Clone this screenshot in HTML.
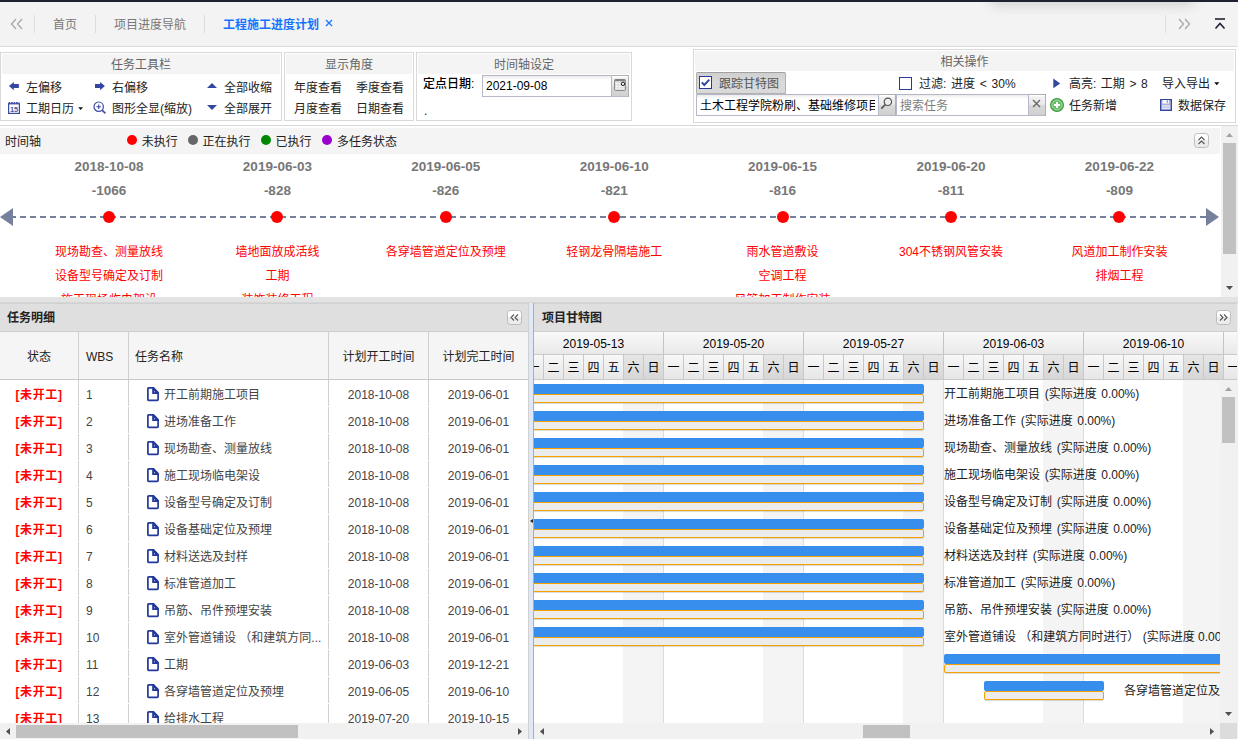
<!DOCTYPE html>
<html lang="zh-CN"><head><meta charset="utf-8"><title>工程施工进度计划</title>
<style>
*{box-sizing:border-box}
html,body{margin:0;padding:0}
body{width:1238px;height:739px;overflow:hidden;position:relative;background:#fff;color:#222;font:12px/16px "Liberation Sans","Noto Sans CJK SC",sans-serif}
i{display:block;position:absolute;font-style:normal}
.topbar{position:absolute;left:0;top:0;width:1238px;height:2px;background:#1f2233}
.tabs{position:absolute;left:0;top:2px;width:1238px;height:45px;background:#f3f3f3;border-bottom:1px solid #dcdcdc;overflow:hidden}
.tabs span{position:absolute;top:15px;line-height:16px;color:#777;white-space:nowrap}
.tabs .sep{position:absolute;top:13px;width:1px;height:18px;background:#dcdce2}
.tabs .act{color:#1673ff;font-weight:bold}
.tabs svg{position:absolute}
.tbar{position:absolute;left:0;top:47px;width:1238px;height:79px;background:#fff;border-bottom:1px solid #d8d8d8}
.grp{position:absolute;border:1px solid #d9d9d9;background:#fff}
.grp .gt{position:absolute;left:1px;right:1px;top:1px;height:20px;background:#f4f4f4;color:#666;text-align:center;line-height:22px}
.grp span{position:absolute;white-space:nowrap;line-height:16px;color:#222}
.grp svg{position:absolute}
.inp{position:absolute;border:1px solid #b5b8c8;background:#fff;height:22px;line-height:20px;padding-left:3px;color:#000;white-space:nowrap;overflow:hidden;background-image:linear-gradient(#ececec,#fff 4px)}
.trg{position:absolute;height:22px;width:17px;border:1px solid #b0b0b0;border-left:0;border-bottom-color:#b5b8c8;background:linear-gradient(#fff 0,#fff 1px,#f1f1f1 2px,#e9e9e9 47%,#d9d9d9 53%,#d0d0d0)}
.cb{position:absolute;width:13px;height:13px;border:1px solid #2b3a9a;background:#fff}
/* timeline */
.tl{position:absolute;left:0;top:126px;width:1238px;height:171px;background:#fff;overflow:hidden}
.tlh{position:absolute;left:0;top:2px;width:1220px;height:26px;background:#f4f4f4}
.tlt{position:absolute;left:5px;top:6px}
.dot{width:10px;height:10px;border-radius:50%;top:6.5px}
.lg{position:absolute;top:6px;white-space:nowrap}
.tool{position:absolute;width:15px;height:15px;border:1px solid #bdbdbd;border-radius:3.5px;background:linear-gradient(#fff 50%,#ececec 50%)}
.tool svg{position:absolute;left:0;top:1px}
.tlb{position:absolute;left:0;top:28px;width:1220px;height:143px;overflow:hidden}
.axis{position:absolute;left:10px;top:62px;width:1198px;height:2px;background:repeating-linear-gradient(90deg,#75809c 0,#75809c 6px,transparent 6px,transparent 10px)}
.arl{left:0;top:54px;width:0;height:0;border-top:9px solid transparent;border-bottom:9px solid transparent;border-right:13px solid #75809c}
.arr{left:1206px;top:54px;width:0;height:0;border-top:9px solid transparent;border-bottom:9px solid transparent;border-left:13px solid #75809c}
.tc{position:absolute;top:0;width:168px;height:143px;text-align:center}
.td,.tn{position:absolute;left:0;width:100%;font-weight:bold;color:#777;font-size:13.5px}
.td{top:5px}.tn{top:29px}
.rd{left:78px;top:57px;width:12px;height:12px;border-radius:50%;background:#f00}
.tt{position:absolute;left:-20px;right:-20px;color:#f00;white-space:nowrap}
/* scrollbars */
.vsb{position:absolute;width:17px;background:#f1f1f1}
.vsb .th{left:2px;width:13px;background:#c1c1c1}
.vsb .up{left:5px;top:7px;width:7px;height:4px;background:#a3a3a3;clip-path:polygon(50% 0,100% 100%,0 100%)}
.vsb .dn{left:5px;bottom:7px;width:7px;height:4px;background:#505050;clip-path:polygon(0 0,100% 0,50% 100%)}
.hsb{position:absolute;height:17px;background:#f1f1f1}
.hsb .th{top:2px;height:13px;background:#c1c1c1}
.hsb .lf{left:6px;top:5px;width:4px;height:7px;background:#505050;clip-path:polygon(100% 0,100% 100%,0 50%)}
.hsb .rt{right:6px;top:5px;width:4px;height:7px;background:#505050;clip-path:polygon(0 0,100% 50%,0 100%)}
.corner{left:686px;bottom:0;width:17px;height:16px;background:#dcdcdc}
.hsplit{position:absolute;left:0;top:297px;width:1238px;height:6px;background:#e3e3e3;border-bottom:1px solid #d6d6d6}
/* left panel */
.lp{position:absolute;left:0;top:303px;width:528px;height:436px;overflow:hidden;background:#fff}
.ph{position:absolute;left:0;top:0;width:100%;height:29px;background:#dfdfdf;border-top:1px solid #d0d0d0;border-bottom:1px solid #cfcfcf}
.ph b{position:absolute;left:7px;top:6px;color:#222;white-space:nowrap}
.gh{position:absolute;left:0;top:29px;width:528px;height:48px;background:#f5f5f5;border-bottom:1px solid #c8c8c8}
.hc{position:absolute;top:0;height:47px;line-height:50px;border-right:1px solid #d0d0d0;white-space:nowrap;color:#222}
.gb{position:absolute;left:0;top:77px;width:528px;height:343px;overflow:hidden}
.r{position:absolute;left:0;width:528px;height:27px;border-bottom:1px solid #fff}
.c{position:absolute;top:0;height:26px;line-height:30px;white-space:nowrap;overflow:hidden;border-right:1px solid #d0d0d0;color:#444}
.st{left:0;width:79px;text-align:center;color:#f00;font-weight:bold;letter-spacing:.6px}
.wb{left:79px;width:50px;padding-left:7px}
.nm{left:129px;width:200px}
.nm span{position:absolute;left:35px;top:0}
.doc{position:absolute;left:18px;top:7px}
.d1{left:329px;width:100px;text-align:center}
.d2{left:429px;width:99px;text-align:center;border-right:0}
.vsplit{position:absolute;left:528px;top:303px;width:6px;height:436px;background:#dfe8f6;border-left:1px solid #d0d0d0;border-right:1px solid #8db2e3}
.vsplit b{position:absolute;left:0;top:202px;width:4px;height:34px;background:#e6e6e6;clip-path:polygon(0 13%,100% 0,100% 100%,0 87%)}
.vsplit i{left:.5px;top:216px;border-top:2.7px solid transparent;border-bottom:2.7px solid transparent;border-right:3.2px solid #222}
/* gantt */
.gp{position:absolute;left:534px;top:303px;width:703px;height:436px;overflow:hidden;background:#fff}
.wk{position:absolute;left:0;top:29px;width:704px;height:22px;background:linear-gradient(#f9f9f9,#e9e9e9);overflow:hidden}
.w{position:absolute;top:0;width:140px;height:22px;line-height:24px;text-align:center;border-right:1px solid #c4c4c4;color:#000}
.dy{position:absolute;left:0;top:51px;width:704px;height:26px;background:linear-gradient(#f9f9f9,#e6e6e6);border-bottom:1px solid #c8c8c8;overflow:hidden}
.d{position:absolute;top:0;width:20px;height:25px;line-height:27px;text-align:center;border-right:1px solid #c8c8c8;border-top:1px solid #cacaca;color:#000}
.d.we{background:linear-gradient(#e6e6e6,#d6d6d6)}
.gbody{position:absolute;left:0;top:77px;width:687px;height:343px;overflow:hidden;background:#fff}
.wl{top:0;width:1px;height:343px;background:#dcdcdc}
.wb2{top:0;width:40px;height:343px;background:#f4f4f4}
.bar{height:10px;background:#388eec;border-radius:2px}
.base{height:9px;background:#ececec;border:1px solid #f5a200;border-radius:2px;box-shadow:0 1px 1px rgba(0,0,0,.15)}
.gl{position:absolute;white-space:nowrap;line-height:18px;color:#222;word-spacing:1.3px}

body{background:#f0f0f0}

</style></head><body>
<div class="topbar"></div>
<div class="tabs">
<i style="left:990px;top:-14px;width:205px;height:14px;border-radius:6px;box-shadow:0 2px 14px rgba(0,0,0,.16)"></i>
<svg style="left:9.5px;top:16px" width="14" height="12" viewBox="0 0 14 12"><path d="M6 1 L1.5 6 L6 11 M12 1 L7.5 6 L12 11" fill="none" stroke="#a4a8b4" stroke-width="1.3"/></svg>
<i class="sep" style="left:34px"></i><span style="left:53px">首页</span>
<i class="sep" style="left:95px"></i><span style="left:114px">项目进度导航</span>
<i class="sep" style="left:204px"></i><span class="act" style="left:223px">工程施工进度计划</span>
<svg style="left:325px;top:17px" width="8" height="8" viewBox="0 0 8 8"><path d="M1 1 L7 7 M7 1 L1 7" stroke="#1673ff" stroke-width="1.3"/></svg>
<i class="sep" style="left:1165px"></i>
<svg style="left:1177px;top:16px" width="14" height="12" viewBox="0 0 14 12"><path d="M2 1 L6.5 6 L2 11 M8 1 L12.5 6 L8 11" fill="none" stroke="#a4a8b4" stroke-width="1.3"/></svg>
<svg style="left:1214px;top:16px" width="12" height="12" viewBox="0 0 12 12"><path d="M1 1 H11" stroke="#1f2233" stroke-width="1.6"/><path d="M1.5 10.5 L6 5.5 L10.5 10.5" fill="none" stroke="#1f2233" stroke-width="1.6"/></svg>
</div>
<div class="tbar">
<div class="grp" style="left:0;top:5px;width:282px;height:69px">
<div class="gt">任务工具栏</div>
<svg style="left:7px;top:29px" width="12" height="9" viewBox="0 0 12 9"><path d="M1 4.1 L5.8 0 V2.1 H10.9 V6 H5.8 V8.3 Z" fill="#3447a0"/></svg><span style="left:25px;top:27px">左偏移</span>
<svg style="left:93px;top:29px" width="12" height="9" viewBox="0 0 12 9"><path d="M10.9 4.1 L6.1 0 V2.1 H1 V6 H6.1 V8.3 Z" fill="#3447a0"/></svg><span style="left:111px;top:27px">右偏移</span>
<svg style="left:206px;top:30px" width="10" height="5" viewBox="0 0 10 5"><path d="M0 5 L5 0 L10 5 Z" fill="#3447a0"/></svg><span style="left:223px;top:27px">全部收缩</span>
<svg style="left:7px;top:49px" width="12" height="12" viewBox="0 0 12 12"><rect x="0.6" y="1.8" width="10.8" height="9.6" fill="#fff" stroke="#3949a0" stroke-width="1.2"/><path d="M0.6 1.1 H11.4" stroke="#3949a0" stroke-width="2" stroke-dasharray="1.6 0.9"/><text x="6.1" y="10.3" font-size="7.8" font-weight="bold" text-anchor="middle" textLength="8.2" lengthAdjust="spacingAndGlyphs" fill="#4a58a8" font-family="Liberation Sans,sans-serif">15</text></svg><span style="left:25px;top:48px">工期日历</span><svg style="left:77px;top:54px" width="6" height="4" viewBox="0 0 6 4"><path d="M0.2 0.2 H5 L2.6 3.1 Z" fill="#111"/></svg>
<svg style="left:92px;top:48.2px" width="14" height="14" viewBox="0 0 14 14"><circle cx="5.7" cy="5.7" r="4.7" fill="none" stroke="#3949a0" stroke-width="1.2"/><path d="M3.4 5.7 H8 M5.7 3.4 V8" stroke="#3949a0" stroke-width="1.1"/><path d="M9.1 9.1 L12.4 12.4" stroke="#3949a0" stroke-width="1.5"/></svg><span style="left:111px;top:48px">图形全显(缩放)</span>
<svg style="left:206px;top:52px" width="10" height="5" viewBox="0 0 10 5"><path d="M0 0 L5 5 L10 0 Z" fill="#3447a0"/></svg><span style="left:223px;top:48px">全部展开</span>
</div>
<div class="grp" style="left:284px;top:5px;width:130px;height:69px">
<div class="gt">显示角度</div>
<span style="left:9px;top:27px">年度查看</span><span style="left:71px;top:27px">季度查看</span>
<span style="left:9px;top:48px">月度查看</span><span style="left:71px;top:48px">日期查看</span>
</div>
<div class="grp" style="left:416px;top:5px;width:216px;height:69px">
<div class="gt">时间轴设定</div>
<span style="left:6px;top:23px;font-weight:500;color:#000">定点日期:</span>
<div class="inp" style="left:65px;top:22px;width:130px">2021-09-08</div>
<div class="trg" style="left:195px;top:22px"><svg style="left:2px;top:3px" width="12" height="12" viewBox="0 0 12 12"><rect x="0.5" y="0.5" width="11" height="11" rx="1" fill="#d4d4d4" stroke="#8a8a8a"/><path d="M1 1.2 H11" stroke="#777" stroke-width="1.4"/><path d="M1.6 3.5 h2 v2 h-2z M4.6 3.5 h2 v2 h-2z M7.6 3.5 h2 v2 h-2z M1.6 6.5 h2 v2 h-2z M4.6 6.5 h2 v2 h-2z M7.6 6.5 h2 v2 h-2z M1.6 9.3 h2 v1.2 h-2z M4.6 9.3 h2 v1.2 h-2z M7.6 9.3 h2 v1.2 h-2z" fill="#fff"/><circle cx="9" cy="4.8" r="1.7" fill="#fff" stroke="#111" stroke-width="1"/></svg></div>
<span style="left:7px;top:50px">.</span>
</div>
<div class="grp" style="left:693px;top:2px;width:543px;height:74px">
<div class="gt">相关操作</div>
<i style="left:2px;top:22px;width:90px;height:22px;background:linear-gradient(#cfcfcf,#d9d9d9 40%);border:1px solid #b0b0b0;border-top-color:#a2a2a2;border-radius:1.5px"></i>
<i class="cb" style="left:5px;top:26px"><svg width="11" height="11" viewBox="0 0 11 11" style="left:0;top:0"><path d="M1.8 5.3 L4.3 8 L9.3 2.6" fill="none" stroke="#3447a0" stroke-width="1.9"/></svg></i><span style="left:25px;top:26px;color:#555">跟踪甘特图</span>
<i class="cb" style="left:205px;top:27px"></i><span style="left:225px;top:26px;word-spacing:1.4px">过滤: 进度 &lt; 30%</span>
<svg style="left:359px;top:27.5px" width="8" height="11" viewBox="0 0 8 11"><path d="M0.3 0.5 L7.2 5.4 L0.3 10.3 Z" fill="#3447a0"/></svg><span style="left:375px;top:26px;word-spacing:1.2px">高亮: 工期 &gt; 8</span>
<span style="left:468px;top:26px">导入导出</span><svg style="left:519.6px;top:32px" width="6" height="4" viewBox="0 0 6 4"><path d="M0.2 0.2 H5.4 L2.8 3.2 Z" fill="#111"/></svg>
<div class="inp" style="left:2px;top:44px;width:183px;line-height:22px"><span style="position:static;display:block;width:175px;overflow:hidden;line-height:22px;color:#000">土木工程学院粉刷、基础维修项目</span></div>
<div class="trg" style="left:185px;top:44px"><svg style="left:1px;top:2px" width="13" height="14" viewBox="0 0 13 14"><circle cx="7.9" cy="4.8" r="3.7" fill="#eee" stroke="#555" stroke-width="1.2"/><path d="M5.3 7.5 L1.3 11.6" stroke="#555" stroke-width="1.7"/></svg></div>
<div class="inp" style="left:202px;top:44px;width:133px;color:#808080;line-height:22px">搜索任务</div>
<div class="trg" style="left:335px;top:44px"><svg style="left:3px;top:4px" width="9" height="9" viewBox="0 0 9 9"><path d="M1 1 L8 8 M8 1 L1 8" stroke="#666" stroke-width="1.4"/></svg></div>
<svg style="left:356px;top:48px" width="14" height="14" viewBox="0 0 14 14"><circle cx="7" cy="7" r="6.4" fill="#69bd69" stroke="#3f9c3f" stroke-width="1.2"/><circle cx="7" cy="7" r="5" fill="none" stroke="#b4e0b4" stroke-width=".8"/><path d="M4 7 H10 M7 4 V10" stroke="#fff" stroke-width="2"/></svg><span style="left:375px;top:48px">任务新增</span>
<svg style="left:466px;top:49px" width="12" height="12" viewBox="0 0 12 12"><rect x="0.6" y="0.6" width="10.8" height="10.8" fill="#aab2dd" stroke="#3447a0" stroke-width="1.2"/><rect x="2.5" y="1" width="6.5" height="3.5" fill="#fff"/><rect x="6.6" y="1.3" width="1.5" height="2.5" fill="#8f99cf"/><path d="M2 7 H10 M2 9.2 H10" stroke="#fff" stroke-width="1"/></svg><span style="left:484px;top:48px">数据保存</span>
</div>
</div>
<div class="tl">
<div class="tlh"><span class="tlt">时间轴</span><i class="dot" style="left:127px;background:#f00"></i><span class="lg" style="left:141.7px">未执行</span><i class="dot" style="left:187.5px;background:#666"></i><span class="lg" style="left:202.5px">正在执行</span><i class="dot" style="left:260.5px;background:#080"></i><span class="lg" style="left:275.5px">已执行</span><i class="dot" style="left:322px;background:#90c"></i><span class="lg" style="left:337px">多任务状态</span><span class="tool" style="left:1194px;top:5px"><svg width="13" height="11" viewBox="0 0 13 11"><path d="M3.5 5 L6.5 2 L9.5 5 M3.5 9 L6.5 6 L9.5 9" fill="none" stroke="#555" stroke-width="1.1"/></svg></span></div>
<div class="tlb">
<div class="axis"></div><i class="arl"></i><i class="arr"></i>
<div class="tc" style="left:25.0px"><div class="td">2018-10-08</div><div class="tn">-1066</div><i class="rd"></i><div class="tt" style="top:90px">现场勘查、测量放线</div><div class="tt" style="top:114px">设备型号确定及订制</div><div class="tt" style="top:138px">施工现场临电架设</div></div>
<div class="tc" style="left:193.4px"><div class="td">2019-06-03</div><div class="tn">-828</div><i class="rd"></i><div class="tt" style="top:90px">墙地面放成活线</div><div class="tt" style="top:114px">工期</div><div class="tt" style="top:138px">装饰装修工程</div></div>
<div class="tc" style="left:361.8px"><div class="td">2019-06-05</div><div class="tn">-826</div><i class="rd"></i><div class="tt" style="top:90px">各穿墙管道定位及预埋</div></div>
<div class="tc" style="left:530.2px"><div class="td">2019-06-10</div><div class="tn">-821</div><i class="rd"></i><div class="tt" style="top:90px">轻钢龙骨隔墙施工</div></div>
<div class="tc" style="left:698.6px"><div class="td">2019-06-15</div><div class="tn">-816</div><i class="rd"></i><div class="tt" style="top:90px">雨水管道敷设</div><div class="tt" style="top:114px">空调工程</div><div class="tt" style="top:138px">风管加工制作安装</div></div>
<div class="tc" style="left:867.0px"><div class="td">2019-06-20</div><div class="tn">-811</div><i class="rd"></i><div class="tt" style="top:90px">304不锈钢风管安装</div></div>
<div class="tc" style="left:1035.4px"><div class="td">2019-06-22</div><div class="tn">-809</div><i class="rd"></i><div class="tt" style="top:90px">风道加工制作安装</div><div class="tt" style="top:114px">排烟工程</div></div>
</div>
<div class="vsb" style="left:1221px;top:0;height:171px"><i class="up"></i><i class="th" style="top:17px;height:111px"></i><i class="dn"></i></div>
</div>
<div class="hsplit"></div>
<div class="lp">
<div class="ph"><b>任务明细</b><span class="tool" style="left:507px;top:6px"><svg width="13" height="11" viewBox="0 0 13 11"><path d="M6 2.5 L3 5.5 L6 8.5 M10 2.5 L7 5.5 L10 8.5" fill="none" stroke="#555" stroke-width="1.1"/></svg></span></div>
<div class="gh"><div class="hc" style="left:0;width:79px;text-align:center">状态</div><div class="hc" style="left:79px;width:50px;padding-left:7px">WBS</div><div class="hc" style="left:129px;width:200px;padding-left:6px">任务名称</div><div class="hc" style="left:329px;width:100px;text-align:center">计划开工时间</div><div class="hc" style="left:429px;width:99px;text-align:center;border-right:0">计划完工时间</div></div>
<div class="gb">
<div class="r" style="top:0px"><div class="c st">[未开工]</div><div class="c wb">1</div><div class="c nm"><svg class="doc" width="12" height="15" viewBox="0 0 12 15"><path d="M0.9 1.7 Q0.9 0.9 1.7 0.9 H6.5 L11.1 5.5 V12.5 Q11.1 13.3 10.3 13.3 H1.7 Q0.9 13.3 0.9 12.5 Z" fill="#fff" stroke="#22389a" stroke-width="1.7"/><path d="M5.2 0.9 H6.5 L11.1 5.5 V7 H5.2 Z" fill="#22389a"/><circle cx="7.6" cy="4.8" r="0.55" fill="#fff"/></svg><span>开工前期施工项目</span></div><div class="c d1">2018-10-08</div><div class="c d2">2019-06-01</div></div>
<div class="r" style="top:27px"><div class="c st">[未开工]</div><div class="c wb">2</div><div class="c nm"><svg class="doc" width="12" height="15" viewBox="0 0 12 15"><path d="M0.9 1.7 Q0.9 0.9 1.7 0.9 H6.5 L11.1 5.5 V12.5 Q11.1 13.3 10.3 13.3 H1.7 Q0.9 13.3 0.9 12.5 Z" fill="#fff" stroke="#22389a" stroke-width="1.7"/><path d="M5.2 0.9 H6.5 L11.1 5.5 V7 H5.2 Z" fill="#22389a"/><circle cx="7.6" cy="4.8" r="0.55" fill="#fff"/></svg><span>进场准备工作</span></div><div class="c d1">2018-10-08</div><div class="c d2">2019-06-01</div></div>
<div class="r" style="top:54px"><div class="c st">[未开工]</div><div class="c wb">3</div><div class="c nm"><svg class="doc" width="12" height="15" viewBox="0 0 12 15"><path d="M0.9 1.7 Q0.9 0.9 1.7 0.9 H6.5 L11.1 5.5 V12.5 Q11.1 13.3 10.3 13.3 H1.7 Q0.9 13.3 0.9 12.5 Z" fill="#fff" stroke="#22389a" stroke-width="1.7"/><path d="M5.2 0.9 H6.5 L11.1 5.5 V7 H5.2 Z" fill="#22389a"/><circle cx="7.6" cy="4.8" r="0.55" fill="#fff"/></svg><span>现场勘查、测量放线</span></div><div class="c d1">2018-10-08</div><div class="c d2">2019-06-01</div></div>
<div class="r" style="top:81px"><div class="c st">[未开工]</div><div class="c wb">4</div><div class="c nm"><svg class="doc" width="12" height="15" viewBox="0 0 12 15"><path d="M0.9 1.7 Q0.9 0.9 1.7 0.9 H6.5 L11.1 5.5 V12.5 Q11.1 13.3 10.3 13.3 H1.7 Q0.9 13.3 0.9 12.5 Z" fill="#fff" stroke="#22389a" stroke-width="1.7"/><path d="M5.2 0.9 H6.5 L11.1 5.5 V7 H5.2 Z" fill="#22389a"/><circle cx="7.6" cy="4.8" r="0.55" fill="#fff"/></svg><span>施工现场临电架设</span></div><div class="c d1">2018-10-08</div><div class="c d2">2019-06-01</div></div>
<div class="r" style="top:108px"><div class="c st">[未开工]</div><div class="c wb">5</div><div class="c nm"><svg class="doc" width="12" height="15" viewBox="0 0 12 15"><path d="M0.9 1.7 Q0.9 0.9 1.7 0.9 H6.5 L11.1 5.5 V12.5 Q11.1 13.3 10.3 13.3 H1.7 Q0.9 13.3 0.9 12.5 Z" fill="#fff" stroke="#22389a" stroke-width="1.7"/><path d="M5.2 0.9 H6.5 L11.1 5.5 V7 H5.2 Z" fill="#22389a"/><circle cx="7.6" cy="4.8" r="0.55" fill="#fff"/></svg><span>设备型号确定及订制</span></div><div class="c d1">2018-10-08</div><div class="c d2">2019-06-01</div></div>
<div class="r" style="top:135px"><div class="c st">[未开工]</div><div class="c wb">6</div><div class="c nm"><svg class="doc" width="12" height="15" viewBox="0 0 12 15"><path d="M0.9 1.7 Q0.9 0.9 1.7 0.9 H6.5 L11.1 5.5 V12.5 Q11.1 13.3 10.3 13.3 H1.7 Q0.9 13.3 0.9 12.5 Z" fill="#fff" stroke="#22389a" stroke-width="1.7"/><path d="M5.2 0.9 H6.5 L11.1 5.5 V7 H5.2 Z" fill="#22389a"/><circle cx="7.6" cy="4.8" r="0.55" fill="#fff"/></svg><span>设备基础定位及预埋</span></div><div class="c d1">2018-10-08</div><div class="c d2">2019-06-01</div></div>
<div class="r" style="top:162px"><div class="c st">[未开工]</div><div class="c wb">7</div><div class="c nm"><svg class="doc" width="12" height="15" viewBox="0 0 12 15"><path d="M0.9 1.7 Q0.9 0.9 1.7 0.9 H6.5 L11.1 5.5 V12.5 Q11.1 13.3 10.3 13.3 H1.7 Q0.9 13.3 0.9 12.5 Z" fill="#fff" stroke="#22389a" stroke-width="1.7"/><path d="M5.2 0.9 H6.5 L11.1 5.5 V7 H5.2 Z" fill="#22389a"/><circle cx="7.6" cy="4.8" r="0.55" fill="#fff"/></svg><span>材料送选及封样</span></div><div class="c d1">2018-10-08</div><div class="c d2">2019-06-01</div></div>
<div class="r" style="top:189px"><div class="c st">[未开工]</div><div class="c wb">8</div><div class="c nm"><svg class="doc" width="12" height="15" viewBox="0 0 12 15"><path d="M0.9 1.7 Q0.9 0.9 1.7 0.9 H6.5 L11.1 5.5 V12.5 Q11.1 13.3 10.3 13.3 H1.7 Q0.9 13.3 0.9 12.5 Z" fill="#fff" stroke="#22389a" stroke-width="1.7"/><path d="M5.2 0.9 H6.5 L11.1 5.5 V7 H5.2 Z" fill="#22389a"/><circle cx="7.6" cy="4.8" r="0.55" fill="#fff"/></svg><span>标准管道加工</span></div><div class="c d1">2018-10-08</div><div class="c d2">2019-06-01</div></div>
<div class="r" style="top:216px"><div class="c st">[未开工]</div><div class="c wb">9</div><div class="c nm"><svg class="doc" width="12" height="15" viewBox="0 0 12 15"><path d="M0.9 1.7 Q0.9 0.9 1.7 0.9 H6.5 L11.1 5.5 V12.5 Q11.1 13.3 10.3 13.3 H1.7 Q0.9 13.3 0.9 12.5 Z" fill="#fff" stroke="#22389a" stroke-width="1.7"/><path d="M5.2 0.9 H6.5 L11.1 5.5 V7 H5.2 Z" fill="#22389a"/><circle cx="7.6" cy="4.8" r="0.55" fill="#fff"/></svg><span>吊筋、吊件预埋安装</span></div><div class="c d1">2018-10-08</div><div class="c d2">2019-06-01</div></div>
<div class="r" style="top:243px"><div class="c st">[未开工]</div><div class="c wb">10</div><div class="c nm"><svg class="doc" width="12" height="15" viewBox="0 0 12 15"><path d="M0.9 1.7 Q0.9 0.9 1.7 0.9 H6.5 L11.1 5.5 V12.5 Q11.1 13.3 10.3 13.3 H1.7 Q0.9 13.3 0.9 12.5 Z" fill="#fff" stroke="#22389a" stroke-width="1.7"/><path d="M5.2 0.9 H6.5 L11.1 5.5 V7 H5.2 Z" fill="#22389a"/><circle cx="7.6" cy="4.8" r="0.55" fill="#fff"/></svg><span>室外管道铺设 （和建筑方同...</span></div><div class="c d1">2018-10-08</div><div class="c d2">2019-06-01</div></div>
<div class="r" style="top:270px"><div class="c st">[未开工]</div><div class="c wb">11</div><div class="c nm"><svg class="doc" width="12" height="15" viewBox="0 0 12 15"><path d="M0.9 1.7 Q0.9 0.9 1.7 0.9 H6.5 L11.1 5.5 V12.5 Q11.1 13.3 10.3 13.3 H1.7 Q0.9 13.3 0.9 12.5 Z" fill="#fff" stroke="#22389a" stroke-width="1.7"/><path d="M5.2 0.9 H6.5 L11.1 5.5 V7 H5.2 Z" fill="#22389a"/><circle cx="7.6" cy="4.8" r="0.55" fill="#fff"/></svg><span>工期</span></div><div class="c d1">2019-06-03</div><div class="c d2">2019-12-21</div></div>
<div class="r" style="top:297px"><div class="c st">[未开工]</div><div class="c wb">12</div><div class="c nm"><svg class="doc" width="12" height="15" viewBox="0 0 12 15"><path d="M0.9 1.7 Q0.9 0.9 1.7 0.9 H6.5 L11.1 5.5 V12.5 Q11.1 13.3 10.3 13.3 H1.7 Q0.9 13.3 0.9 12.5 Z" fill="#fff" stroke="#22389a" stroke-width="1.7"/><path d="M5.2 0.9 H6.5 L11.1 5.5 V7 H5.2 Z" fill="#22389a"/><circle cx="7.6" cy="4.8" r="0.55" fill="#fff"/></svg><span>各穿墙管道定位及预埋</span></div><div class="c d1">2019-06-05</div><div class="c d2">2019-06-10</div></div>
<div class="r" style="top:324px"><div class="c st">[未开工]</div><div class="c wb">13</div><div class="c nm"><svg class="doc" width="12" height="15" viewBox="0 0 12 15"><path d="M0.9 1.7 Q0.9 0.9 1.7 0.9 H6.5 L11.1 5.5 V12.5 Q11.1 13.3 10.3 13.3 H1.7 Q0.9 13.3 0.9 12.5 Z" fill="#fff" stroke="#22389a" stroke-width="1.7"/><path d="M5.2 0.9 H6.5 L11.1 5.5 V7 H5.2 Z" fill="#22389a"/><circle cx="7.6" cy="4.8" r="0.55" fill="#fff"/></svg><span>给排水工程</span></div><div class="c d1">2019-07-20</div><div class="c d2">2019-10-15</div></div>
</div>
<div class="hsb" style="left:0;top:420px;width:528px"><i class="lf"></i><i class="th" style="left:16px;width:282px"></i><i class="rt"></i></div>
</div>
<div class="vsplit"><b></b><i></i></div>
<div class="gp">
<div class="ph"><b style="left:8px">项目甘特图</b><span class="tool" style="left:682px;top:6px"><svg width="13" height="11" viewBox="0 0 13 11"><path d="M3 2.5 L6 5.5 L3 8.5 M7 2.5 L10 5.5 L7 8.5" fill="none" stroke="#555" stroke-width="1.1"/></svg></span></div>
<div class="wk"><div class="w" style="left:-10px">2019-05-13</div><div class="w" style="left:130px">2019-05-20</div><div class="w" style="left:270px">2019-05-27</div><div class="w" style="left:410px">2019-06-03</div><div class="w" style="left:550px">2019-06-10</div><div class="w" style="left:690px">2019-06-17</div></div>
<div class="dy"><div class="d" style="left:-10px">一</div><div class="d" style="left:10px">二</div><div class="d" style="left:30px">三</div><div class="d" style="left:50px">四</div><div class="d" style="left:70px">五</div><div class="d we" style="left:90px">六</div><div class="d we" style="left:110px">日</div><div class="d" style="left:130px">一</div><div class="d" style="left:150px">二</div><div class="d" style="left:170px">三</div><div class="d" style="left:190px">四</div><div class="d" style="left:210px">五</div><div class="d we" style="left:230px">六</div><div class="d we" style="left:250px">日</div><div class="d" style="left:270px">一</div><div class="d" style="left:290px">二</div><div class="d" style="left:310px">三</div><div class="d" style="left:330px">四</div><div class="d" style="left:350px">五</div><div class="d we" style="left:370px">六</div><div class="d we" style="left:390px">日</div><div class="d" style="left:410px">一</div><div class="d" style="left:430px">二</div><div class="d" style="left:450px">三</div><div class="d" style="left:470px">四</div><div class="d" style="left:490px">五</div><div class="d we" style="left:510px">六</div><div class="d we" style="left:530px">日</div><div class="d" style="left:550px">一</div><div class="d" style="left:570px">二</div><div class="d" style="left:590px">三</div><div class="d" style="left:610px">四</div><div class="d" style="left:630px">五</div><div class="d we" style="left:650px">六</div><div class="d we" style="left:670px">日</div><div class="d" style="left:690px">一</div><div class="d" style="left:710px">二</div><div class="d" style="left:730px">三</div><div class="d" style="left:750px">四</div><div class="d" style="left:770px">五</div><div class="d we" style="left:790px">六</div><div class="d we" style="left:810px">日</div></div>
<div class="gbody">
<i class="wl" style="left:-11px"></i><i class="wb2" style="left:89px"></i><i class="wl" style="left:129px"></i><i class="wb2" style="left:229px"></i><i class="wl" style="left:269px"></i><i class="wb2" style="left:369px"></i><i class="wl" style="left:409px"></i><i class="wb2" style="left:509px"></i><i class="wl" style="left:549px"></i><i class="wb2" style="left:649px"></i><i class="wl" style="left:689px"></i><i class="wb2" style="left:789px"></i>
<i class="bar" style="left:-20px;width:410px;top:4px"></i><i class="base" style="left:-20px;width:410px;top:14px"></i><span class="gl" style="left:410px;top:5px">开工前期施工项目 (实际进度 0.00%)</span>
<i class="bar" style="left:-20px;width:410px;top:31px"></i><i class="base" style="left:-20px;width:410px;top:41px"></i><span class="gl" style="left:410px;top:32px">进场准备工作 (实际进度 0.00%)</span>
<i class="bar" style="left:-20px;width:410px;top:58px"></i><i class="base" style="left:-20px;width:410px;top:68px"></i><span class="gl" style="left:410px;top:59px">现场勘查、测量放线 (实际进度 0.00%)</span>
<i class="bar" style="left:-20px;width:410px;top:85px"></i><i class="base" style="left:-20px;width:410px;top:95px"></i><span class="gl" style="left:410px;top:86px">施工现场临电架设 (实际进度 0.00%)</span>
<i class="bar" style="left:-20px;width:410px;top:112px"></i><i class="base" style="left:-20px;width:410px;top:122px"></i><span class="gl" style="left:410px;top:113px">设备型号确定及订制 (实际进度 0.00%)</span>
<i class="bar" style="left:-20px;width:410px;top:139px"></i><i class="base" style="left:-20px;width:410px;top:149px"></i><span class="gl" style="left:410px;top:140px">设备基础定位及预埋 (实际进度 0.00%)</span>
<i class="bar" style="left:-20px;width:410px;top:166px"></i><i class="base" style="left:-20px;width:410px;top:176px"></i><span class="gl" style="left:410px;top:167px">材料送选及封样 (实际进度 0.00%)</span>
<i class="bar" style="left:-20px;width:410px;top:193px"></i><i class="base" style="left:-20px;width:410px;top:203px"></i><span class="gl" style="left:410px;top:194px">标准管道加工 (实际进度 0.00%)</span>
<i class="bar" style="left:-20px;width:410px;top:220px"></i><i class="base" style="left:-20px;width:410px;top:230px"></i><span class="gl" style="left:410px;top:221px">吊筋、吊件预埋安装 (实际进度 0.00%)</span>
<i class="bar" style="left:-20px;width:410px;top:247px"></i><i class="base" style="left:-20px;width:410px;top:257px"></i><span class="gl" style="left:410px;top:248px;word-spacing:0">室外管道铺设 （和建筑方同时进行） (实际进度 0.00%)</span>
<i class="bar" style="left:410px;width:400px;top:274px"></i><i class="base" style="left:410px;width:400px;top:284px"></i>
<i class="bar" style="left:450px;width:120px;top:301px"></i><i class="base" style="left:450px;width:120px;top:311px"></i><span class="gl" style="left:590px;top:302px">各穿墙管道定位及预埋 (实际进度 0.00%)</span>
</div>
<div class="vsb" style="left:686px;top:77px;height:343px"><i class="up"></i><i class="th" style="top:17px;height:46px"></i><i class="dn"></i></div>
<div class="hsb" style="left:0;top:420px;width:686px"><i class="lf"></i><i class="th" style="left:329px;width:47px"></i><i class="rt"></i></div><i class="corner"></i>
</div>
</body></html>
